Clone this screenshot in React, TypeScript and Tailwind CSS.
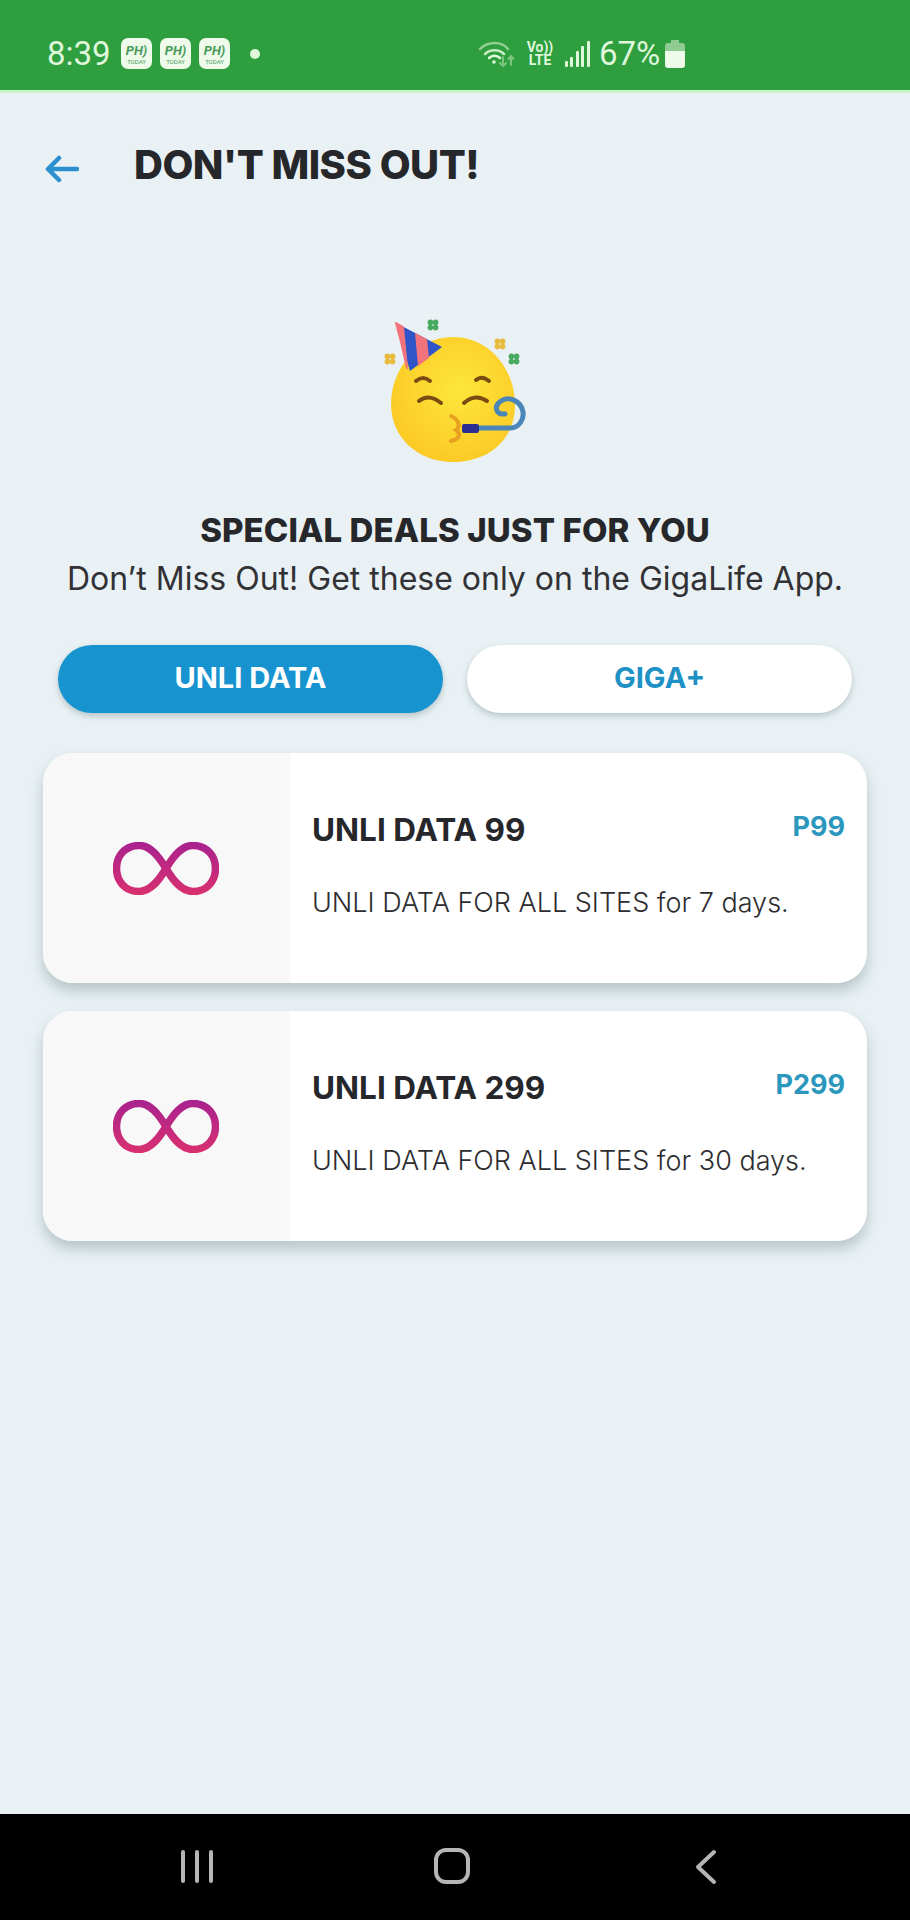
const deals = [
  { name: "UNLI DATA 99", price: "P99", desc: "UNLI DATA FOR ALL SITES for 7 days." },
  { name: "UNLI DATA 299", price: "P299", desc: "UNLI DATA FOR ALL SITES for 30 days." },
];

const PhToday = () => (
  <div className="flex h-[31px] w-[31px] flex-col items-center justify-center rounded-[7px] bg-[#eefaea] text-[#4a9a5a]">
    <span className="h-[15px] text-[13px] font-bold italic leading-[15px]">PH)</span>
    <span className="h-[7px] text-[6px] leading-[7px]">TODAY</span>
  </div>
);

const StatusBar = () => (
  <div className="flex h-[93px] shrink-0 items-center border-b-[3px] border-[#c8f3c6] bg-[#2f9e3f] pl-[47px] pt-[17px] font-['Roboto',sans-serif] text-[#dff7da]">
    <span className="w-[74px] text-[33px] leading-none">8:39</span>
    <div className="flex gap-[8px]">
      <PhToday />
      <PhToday />
      <PhToday />
    </div>
    <span className="ml-[20px] h-[10px] w-[10px] rounded-full bg-[#dff7da]" />
    <svg className="ml-[218px]" width="36" height="28" viewBox="0 0 36 28" fill="none" strokeLinecap="round">
      <path d="M2 9C10 1 24 1 30 9" stroke="#8fcf8f" strokeWidth="2.5" />
      <path d="M7 14C12 9 21 9 26 14" stroke="#c8edc4" strokeWidth="2.5" />
      <path d="M11 18C14 15 19 15 22 18" stroke="#dff7da" strokeWidth="2.5" />
      <circle cx="16" cy="22" r="1.8" fill="#dff7da" />
      <path d="M25 17V26M22 23L25 26L28 23" stroke="#7cc47f" strokeWidth="2" />
      <path d="M33 25V16M30.5 19L33 16L35.5 19" stroke="#7cc47f" strokeWidth="2" />
    </svg>
    <div className="ml-[11px] flex w-[30px] flex-col items-center text-[14px] font-bold leading-[13px]">
      <span>Vo))</span>
      <span>LTE</span>
    </div>
    <svg className="ml-[10px]" width="25" height="26" viewBox="0 0 25 26" fill="#dff7da">
      <rect x="0" y="20" width="3" height="6" rx="1" />
      <rect x="5" y="16" width="3" height="10" rx="1" />
      <rect x="11" y="10" width="3" height="16" rx="1" />
      <rect x="16" y="5" width="3" height="21" rx="1" />
      <rect x="22" y="0" width="3" height="26" rx="1" />
    </svg>
    <span className="ml-[9px] text-[33px] leading-none">67%</span>
    <svg className="ml-[5px]" width="20" height="28" viewBox="0 0 20 28">
      <path d="M6 0H14V3H17Q20 3 20 6V11H0V6Q0 3 3 3H6Z" fill="#8fcb93" />
      <path d="M0 11H20V25Q20 28 17 28H3Q0 28 0 25Z" fill="#eefaea" />
    </svg>
  </div>
);

// little four-lobed confetti pieces
const Confetti = ({ x, y, color }: { x: number; y: number; color: string }) => (
  <g fill={color}>
    <circle cx={x - 2.6} cy={y - 2.6} r="2.8" />
    <circle cx={x + 2.6} cy={y - 2.6} r="2.8" />
    <circle cx={x - 2.6} cy={y + 2.6} r="2.8" />
    <circle cx={x + 2.6} cy={y + 2.6} r="2.8" />
  </g>
);

const PartyEmoji = () => (
  <svg width="190" height="180" viewBox="0 0 190 180" fill="none" strokeLinecap="round">
    <defs>
      <radialGradient id="face" cx="55%" cy="42%" r="65%">
        <stop offset="0%" stopColor="#fde63a" />
        <stop offset="100%" stopColor="#fbc723" />
      </radialGradient>
    </defs>
    <path d="M93 37C130 37 155 70 155 105C155 140 128 162 93 162C57 162 31 137 31 104C31 70 56 37 93 37Z" fill="url(#face)" />
    <path d="M36 23L82 47L50 71Z" fill="#2f55c9" />
    <path d="M36 23L43 27L47 68L41 42Z" fill="#f2737c" stroke="#f2737c" strokeWidth="2" strokeLinejoin="round" />
    <path d="M55 33L67 39L69 58L58 66Z" fill="#f2737c" />
    <Confetti x={73} y={25} color="#48a960" />
    <Confetti x={154} y={59} color="#48a960" />
    <Confetti x={30} y={59} color="#e8bb3f" />
    <Confetti x={140} y={44} color="#e8bb3f" />
    <g stroke="#7a4c12" strokeWidth="4">
      <path d="M56 81Q63 75 70 81" />
      <path d="M116 80Q122 75 129 81" />
      <path d="M59 101Q69 93 81 103" />
      <path d="M104 103Q115 93 127 101" />
    </g>
    <path d="M91 116C100 120 100 128 96 130C101 134 100 139 91 141" stroke="#e8a020" strokeWidth="4" />
    <path d="M118 128H150C160 128 164 118 163 112C161 100 148 96 141 101C133 106 136 115 145 114" stroke="#4a86b8" strokeWidth="5" />
    <rect x="102" y="124" width="17" height="9" rx="2" fill="#2c2f92" />
  </svg>
);

const InfinityMark = () => (
  <svg width="106" height="53" viewBox="0 0 106 53" fill="none">
    <defs>
      <linearGradient id="inf" gradientUnits="userSpaceOnUse" x1="0" y1="0" x2="0" y2="53">
        <stop offset="0%" stopColor="#a8228f" />
        <stop offset="100%" stopColor="#d9306f" />
      </linearGradient>
    </defs>
    <path
      d="M53 26.5C45 13 37 3.5 26 3.5C12 3.5 3.5 14 3.5 26.5C3.5 39 12 49.5 26 49.5C37 49.5 45 40 53 26.5C61 13 69 3.5 80 3.5C94 3.5 102.5 14 102.5 26.5C102.5 39 94 49.5 80 49.5C69 49.5 61 40 53 26.5Z"
      stroke="url(#inf)"
      strokeWidth="7.5"
    />
  </svg>
);

const DealCard = ({ deal }: { deal: (typeof deals)[number] }) => (
  <div className="flex h-[230px] overflow-hidden rounded-[30px] bg-white shadow-[0_8px_14px_rgba(70,95,100,0.3)]">
    <div className="flex w-[247px] shrink-0 items-center justify-center bg-[#f9f8f9] pr-[2px]">
      <InfinityMark />
    </div>
    <div className="flex-1 pl-[22px] pr-[22px]">
      <div className="flex items-start justify-between pt-[55px]">
        <span className="text-[31.5px] font-bold leading-[44px] text-[#26272b]">{deal.name}</span>
        <span className="text-[27px] font-bold leading-[38px] text-[#2b97bd]">{deal.price}</span>
      </div>
      <p className="mt-[32px] text-[27px] font-light leading-[38px] text-[#2d2d30]">{deal.desc}</p>
    </div>
  </div>
);

export default function App() {
  return (
    <div className="flex h-[1920px] w-[910px] flex-col overflow-hidden bg-[#e9f1f4] font-['Inter',sans-serif]">
      <StatusBar />

      <div className="flex-1">
        <div className="mt-[34px] flex h-[74px] items-center pl-[45px] pt-[2px]">
          <svg className="translate-y-[4px]" width="34" height="28" viewBox="0 0 34 28" fill="none" stroke="#2b8fd0" strokeWidth="4.5" strokeLinecap="round" strokeLinejoin="round">
            <path d="M32 14H3M14 3L3 14L14 25" />
          </svg>
          <h1 className="ml-[55px] text-[40px] font-extrabold leading-none tracking-[-0.5px] text-[#26272b]">DON'T MISS OUT!</h1>
        </div>

        <div className="mt-[99px] flex justify-center">
          <PartyEmoji />
        </div>

        <h2 className="mt-[28px] text-center text-[33px] font-extrabold leading-[44px] tracking-[0.1px] text-[#26272b]">SPECIAL DEALS JUST FOR YOU</h2>
        <p className="mt-[5px] text-center text-[32px] leading-[44px] text-[#323236]">Don’t Miss Out! Get these only on the GigaLife App.</p>

        <div className="mt-[44px] flex gap-[24px] px-[58px]">
          <button className="h-[68px] flex-1 rounded-full bg-[#1793cf] pb-[3px] text-[29px] font-bold text-white shadow-[0_3px_6px_rgba(70,95,100,0.3)]">UNLI DATA</button>
          <button className="h-[68px] flex-1 rounded-full bg-white pb-[3px] text-[29px] font-bold text-[#2091c4] shadow-[0_3px_6px_rgba(70,95,100,0.3)]">GIGA+</button>
        </div>

        <div className="mt-[40px] flex flex-col gap-[28px] pl-[43px] pr-[43px]">
          {deals.map((deal) => (
            <DealCard key={deal.name} deal={deal} />
          ))}
        </div>
      </div>

      <div className="flex h-[106px] shrink-0 items-start bg-black pt-[34px]">
        <div className="ml-[181px] flex h-[36px] items-center gap-[10px]">
          <span className="h-[33px] w-[4px] rounded-full bg-[#b5b5b5]" />
          <span className="h-[33px] w-[4px] rounded-full bg-[#b5b5b5]" />
          <span className="h-[33px] w-[4px] rounded-full bg-[#b5b5b5]" />
        </div>
        <div className="ml-[221px] h-[36px] w-[36px] rounded-[12px] border-[4px] border-[#b5b5b5]" />
        <svg className="ml-[224px] mt-[1px]" width="24" height="36" viewBox="0 0 24 36" fill="none" stroke="#b5b5b5" strokeWidth="4" strokeLinecap="round" strokeLinejoin="round">
          <path d="M20 3L4 18L20 33" />
        </svg>
      </div>
    </div>
  );
}
